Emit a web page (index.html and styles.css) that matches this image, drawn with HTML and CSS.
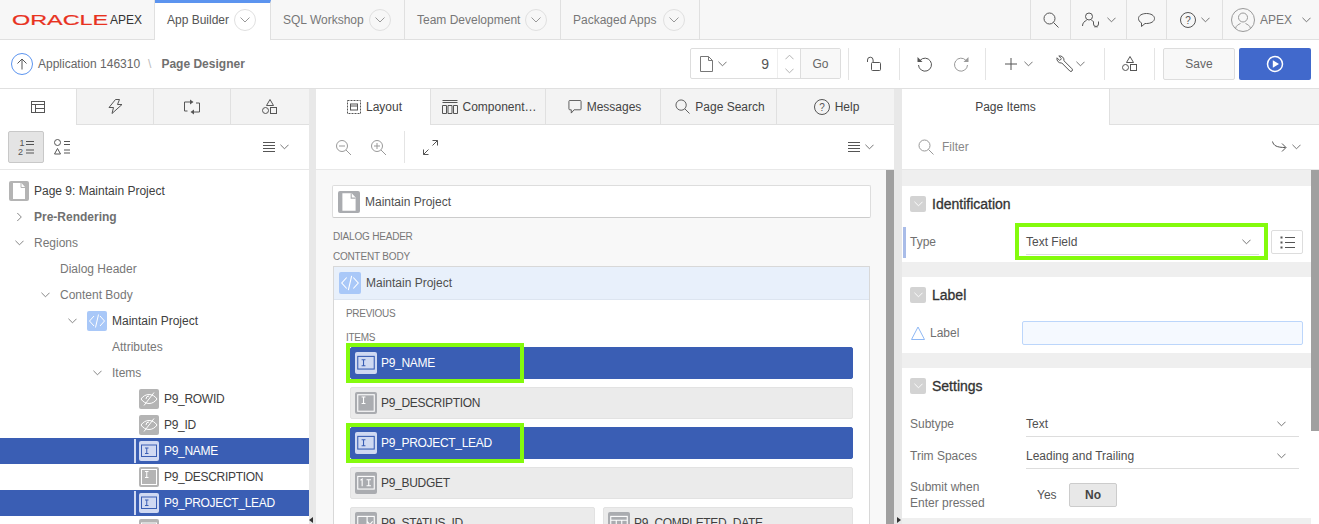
FILE: index.html
```html
<!DOCTYPE html>
<html>
<head>
  <title>Page Designer</title>
  <link rel="stylesheet" href="styles.css">
</head>
<body>
  <svg class="defs">
    <symbol id="chev" viewBox="0 0 10 6"><path d="M.5.5 5 5 9.500.5"/></symbol>
    <symbol id="search" viewBox="0 0 16 16"><circle cx="6.500" cy="6.500" r="5.500"/><path d="m10.500 10.500 5 5"/></symbol>
    <symbol id="page" viewBox="0 0 13 16"><path d="M.5.5h8l4 4v11H.5zM8.500.5v4h4"/></symbol>
    <symbol id="lock" viewBox="0 0 14 15"><path d="M.5 6V4a2.800 2.800 0 0 1 5.600 0v2.500"/><rect x="4.500" y="6.500" width="9" height="8" rx="1"/></symbol>
    <symbol id="undo" viewBox="0 0 16 16"><path d="M3 4.500A6.500 6.500 0 1 1 1.500 9"/><path class="solid" d="M.5 1v5h5z"/></symbol>
    <symbol id="redo" viewBox="0 0 16 16"><path d="M13 4.500A6.500 6.500 0 1 0 14.500 9"/><path class="solid" d="M15.500 1v5h-5z"/></symbol>
    <symbol id="plus" viewBox="0 0 12 12"><path d="M6 0v12M0 6h12"/></symbol>
    <symbol id="wrench" viewBox="0 0 17 17"><path d="M16 13.800 8 5.800A4.300 4.300 0 0 0 2.800 1l2.700 2.700-1.800 1.800L1 2.800a4.300 4.300 0 0 0 4.800 5.200l8 8a1.500 1.500 0 0 0 2.200-2.200z"/></symbol>
    <symbol id="shapes" viewBox="0 0 16 16"><path d="M8 .5l3.500 6h-7z"/><circle cx="3.500" cy="11.500" r="3"/><rect x="8.500" y="8.500" width="6" height="6"/></symbol>
    <symbol id="play" viewBox="0 0 18 18"><circle cx="9" cy="9" r="7.500"/><path class="solid" d="M6.800 5.300v7.400L13 9z"/></symbol>
    <symbol id="userkey" viewBox="0 0 20 16"><circle cx="7" cy="4.500" r="3.500"/><path d="M.5 14c0-3 2-5 4-5.500M9.500 8.500c1 .3 1.500.7 2 1.200"/><path d="M11.500 9.500v2.500a2.500 2.500 0 0 0 5 0V9.500M13 14.500v1M15 14.500v1"/></symbol>
    <symbol id="chat" viewBox="0 0 17 14"><path d="M8.500.5c4.400 0 8 2 8 5s-3.600 5-8 5H7l-3.500 3v-3.600C1.700 9 .5 7.400.5 5.500c0-3 3.600-5 8-5z"/></symbol>
    <symbol id="help" viewBox="0 0 16 16"><circle cx="8" cy="8" r="7.500"/><text x="8" y="11.500" text-anchor="middle" class="glyph">?</text></symbol>
    <symbol id="avatar" viewBox="0 0 24 24"><circle cx="12" cy="12" r="11.500"/><circle cx="12" cy="9.500" r="4.500"/><path d="M4.500 20.500c.5-3 3-4 5-5M19.500 20.500c-.5-3-3-4-5-5"/></symbol>
    <symbol id="up" viewBox="0 0 22 22"><circle class="blue" cx="11" cy="11" r="10.500"/><path d="M11 16.500V6M6.500 10.500 11 6l4.500 4.500"/></symbol>
    <symbol id="table" viewBox="0 0 14 12"><rect x=".5" y=".5" width="13" height="11"/><path d="M.5 3.500h13M4.500 3.500v8M4.500 7.500h9"/></symbol>
    <symbol id="bolt" viewBox="0 0 14 15"><path d="M7 .5.500 8.500H5L3.500 14.500 13.500 5.500H9L11 .5zM12 .5"/></symbol>
    <symbol id="swap" viewBox="0 0 16 15"><path d="M6 2.500H.5v9h3M10 12.500h5.500v-9H12"/><path class="solid" d="M6 0v5l3.500-2.500zM10 10v5l-3.500-2.500z"/></symbol>
    <symbol id="numlist" viewBox="0 0 17 16"><text x="1.500" y="7" class="digit">1</text><text x="0" y="15.500" class="digit">2</text><path d="M8 2.500h8M8 5.500h8M8 11h8M8 14h8"/></symbol>
    <symbol id="typelist" viewBox="0 0 16 16"><circle cx="3.500" cy="3.500" r="3"/><path d="M3.500 9.500 6.500 15H.5zM10 2.500h6M10 5.500h6M10 11h6M10 14h6"/></symbol>
    <symbol id="menu" viewBox="0 0 12 10"><path d="M0 .5h12M0 3.500h12M0 6.500h12M0 9.500h12"/></symbol>
    <symbol id="zoomout" viewBox="0 0 15 15"><circle cx="6" cy="6" r="5.500"/><path d="m10 10 5 5M3 6h6"/></symbol>
    <symbol id="zoomin" viewBox="0 0 15 15"><circle cx="6" cy="6" r="5.500"/><path d="m10 10 5 5M3 6h6M6 3v6"/></symbol>
    <symbol id="expand" viewBox="0 0 15 15"><path d="M.5 14.500l5-5M.5 9.500v5h5M14.500.5l-5 5M9.500.5h5v5"/></symbol>
    <symbol id="layout" viewBox="0 0 14 14"><rect class="dash" x=".5" y=".5" width="13" height="13"/><rect x="3.500" y="4" width="7" height="6"/><path d="M3.500 6h7"/></symbol>
    <symbol id="columns" viewBox="0 0 16 14"><path d="M.5.500h15M.5 2.500h15"/><path d="M.5 5.500h4v8h-4zM6 5.500h4v8H6zM11.500 5.500h4v8h-4z"/></symbol>
    <symbol id="message" viewBox="0 0 14 15"><path d="M1.500.5h11a1 1 0 0 1 1 1v8a1 1 0 0 1-1 1H6l-3 3.500v-3.500H1.500a1 1 0 0 1-1-1v-8a1 1 0 0 1 1-1z"/></symbol>
    <symbol id="route" viewBox="0 0 15 12"><path d="M.5.500c1 4 4 6 13 6M10 2.500l4 4-4 4"/></symbol>
    <symbol id="list" viewBox="0 0 15 13"><path d="M5 1.500h10M5 6.500h10M5 11.500h10"/><path class="solid" d="M.5.500h2v2h-2zM.5 5.500h2v2h-2zM.5 10.500h2v2h-2z"/></symbol>
    <symbol id="triangle" viewBox="0 0 14 14"><path d="M7 1 13.500 13.500H.5z"/></symbol>
    <symbol id="code" viewBox="0 0 20 20"><path d="M7 5 2.500 10 7 15M13 5l4.500 5-4.500 5M11.500 3.500l-3 13"/></symbol>
    <symbol id="sheet" viewBox="0 0 20 20"><path class="solid" d="M4 2h8.500L16 6v12H4z"/><path class="cut" d="M12 2v4.500h4"/></symbol>
    <symbol id="eyeoff" viewBox="0 0 20 20"><path d="M2 10c2-3 5-4.500 8-4.500s6 1.500 8 4.500c-2 3-5 4.500-8 4.500S4 13 2 10zM15 3.500l-10 13"/><path d="M10 7a3 3 0 0 0-3 3"/></symbol>
    <symbol id="textitem" viewBox="0 0 20 20"><rect x="2.500" y="4" width="15" height="11.500"/><path d="M6 7h3.500M6 12.500h3.500M7.750 7v5.500"/></symbol>
    <symbol id="areaitem" viewBox="0 0 20 20"><rect x="2.500" y="2.500" width="15" height="15"/><path d="M6 4.500h3.500M6 10.500h3.500M7.750 4.500v6"/></symbol>
    <symbol id="numitem" viewBox="0 0 20 20"><rect x="2.500" y="4" width="15" height="11.500"/><path d="M5 7.500l1.500-1v6.500M10.500 7h4M10.500 12.500h4M12.500 7v5.500"/></symbol>
    <symbol id="selitem" viewBox="0 0 20 20"><rect x="2.500" y="4" width="15" height="11.500"/><path d="M11 8.500l2.500 3 2.500-3M11 4v11.500"/></symbol>
    <symbol id="dateitem" viewBox="0 0 20 20"><rect x="2.500" y="4" width="15" height="13"/><path d="M2.500 7.500h15M7.500 7.500V17M12.500 7.500V17M2.500 12h15"/></symbol>
  </svg>

  <header class="topbar">
    <div class="logo"><span class="logo-oracle">ORACLE</span><span class="logo-apex">APEX</span></div>
    <a class="nav-tab active" style="width:116px">App Builder <span class="nav-arrow"><svg class="ic chev"><use href="#chev"/></svg></span></a>
    <a class="nav-tab" style="width:134px">SQL Workshop <span class="nav-arrow"><svg class="ic chev"><use href="#chev"/></svg></span></a>
    <a class="nav-tab" style="width:156px">Team Development <span class="nav-arrow"><svg class="ic chev"><use href="#chev"/></svg></span></a>
    <a class="nav-tab wide-gap" style="width:139px">Packaged Apps <span class="nav-arrow"><svg class="ic chev"><use href="#chev"/></svg></span></a>
    <div class="top-right">
      <div class="top-cell cell-40"><svg class="ic s16"><use href="#search"/></svg></div>
      <div class="top-cell cell-56"><svg class="ic user-key"><use href="#userkey"/></svg><svg class="ic chev"><use href="#chev"/></svg></div>
      <div class="top-cell cell-40"><svg class="ic chat"><use href="#chat"/></svg></div>
      <div class="top-cell cell-56"><svg class="ic s16"><use href="#help"/></svg><svg class="ic chev"><use href="#chev"/></svg></div>
      <div class="top-cell cell-user"><svg class="ic s24"><use href="#avatar"/></svg><span class="user-name">APEX</span><svg class="ic chev"><use href="#chev"/></svg></div>
    </div>
  </header>

  <div class="toolbar">
    <div class="crumbs">
      <svg class="ic s22"><use href="#up"/></svg>
      <span>Application 146310</span>
      <span class="crumb-sep">\</span>
      <b>Page Designer</b>
    </div>
    <div class="tools">
      <div class="page-box">
        <div class="page-pick"><svg class="ic page-ic"><use href="#page"/></svg><svg class="ic chev"><use href="#chev"/></svg><span class="page-num">9</span></div>
        <div class="page-spin"><svg class="ic chev flip"><use href="#chev"/></svg><svg class="ic chev"><use href="#chev"/></svg></div>
        <div class="page-go">Go</div>
      </div>
      <div class="tool-group g-lock"><svg class="ic lock"><use href="#lock"/></svg></div>
      <div class="tool-group g-undo"><svg class="ic s16"><use href="#undo"/></svg><svg class="ic s16 muted"><use href="#redo"/></svg></div>
      <div class="tool-group g-add">
        <svg class="ic s12"><use href="#plus"/></svg><svg class="ic chev add-chev"><use href="#chev"/></svg>
        <svg class="ic wrench"><use href="#wrench"/></svg><svg class="ic chev wrench-chev"><use href="#chev"/></svg>
      </div>
      <div class="tool-group g-shapes"><svg class="ic s16"><use href="#shapes"/></svg></div>
      <div class="btn-save">Save</div>
      <div class="btn-run"><svg class="ic s18"><use href="#play"/></svg></div>
    </div>
  </div>

  <main class="panes">
    <section class="pane-left">
      <div class="tabs">
        <div class="tab active t77"><svg class="ic table"><use href="#table"/></svg></div>
        <div class="tab t77"><svg class="ic s15"><use href="#bolt"/></svg></div>
        <div class="tab t77"><svg class="ic s16"><use href="#swap"/></svg></div>
        <div class="tab grow"><svg class="ic s16"><use href="#shapes"/></svg></div>
      </div>
      <div class="subbar">
        <div class="view-btn on"><svg class="ic numlist"><use href="#numlist"/></svg></div>
        <div class="view-btn"><svg class="ic s16"><use href="#typelist"/></svg></div>
        <div class="menu-btn"><svg class="ic menu"><use href="#menu"/></svg><svg class="ic chev"><use href="#chev"/></svg></div>
      </div>
      <div class="tree">
        <div class="node lvl0"><span class="node-ic"><svg class="ic s20"><use href="#sheet"/></svg></span><span class="dark">Page 9: Maintain Project</span></div>
        <div class="node lvl1"><span class="twist"><svg class="ic chev right"><use href="#chev"/></svg></span><b>Pre-Rendering</b></div>
        <div class="node lvl1"><span class="twist"><svg class="ic chev"><use href="#chev"/></svg></span>Regions</div>
        <div class="node lvl2">Dialog Header</div>
        <div class="node lvl2"><span class="twist"><svg class="ic chev"><use href="#chev"/></svg></span>Content Body</div>
        <div class="node lvl3"><span class="twist"><svg class="ic chev"><use href="#chev"/></svg></span><span class="node-ic blue-ic"><svg class="ic s20"><use href="#code"/></svg></span><span class="dark">Maintain Project</span></div>
        <div class="node lvl4">Attributes</div>
        <div class="node lvl4"><span class="twist"><svg class="ic chev"><use href="#chev"/></svg></span>Items</div>
        <div class="node lvl5"><span class="node-ic"><svg class="ic s20"><use href="#eyeoff"/></svg></span><span class="dark">P9_ROWID</span></div>
        <div class="node lvl5"><span class="node-ic"><svg class="ic s20"><use href="#eyeoff"/></svg></span><span class="dark">P9_ID</span></div>
        <div class="node lvl5 sel"><span class="node-ic"><svg class="ic s20"><use href="#textitem"/></svg></span><span class="dark">P9_NAME</span></div>
        <div class="node lvl5"><span class="node-ic"><svg class="ic s20"><use href="#areaitem"/></svg></span><span class="dark">P9_DESCRIPTION</span></div>
        <div class="node lvl5 sel"><span class="node-ic"><svg class="ic s20"><use href="#textitem"/></svg></span><span class="dark">P9_PROJECT_LEAD</span></div>
        <div class="node lvl5"><span class="node-ic"><svg class="ic s20"><use href="#numitem"/></svg></span><span class="dark">P9_BUDGET</span></div>
      </div>
    </section>

    <div class="splitter w7"><span class="grip grip-left"></span></div>

    <section class="pane-center">
      <div class="tabs">
        <div class="tab active center-tab w115"><svg class="ic s14"><use href="#layout"/></svg>Layout</div>
        <div class="tab center-tab w115 tight"><svg class="ic s16"><use href="#columns"/></svg>Component…</div>
        <div class="tab center-tab w115"><svg class="ic s14"><use href="#message"/></svg>Messages</div>
        <div class="tab center-tab w116"><svg class="ic s15"><use href="#search"/></svg>Page Search</div>
        <div class="tab center-tab grow help-tab"><svg class="ic s16"><use href="#help"/></svg>Help</div>
      </div>
      <div class="subbar center-bar">
        <svg class="ic s15 muted"><use href="#zoomout"/></svg>
        <svg class="ic s15 muted zoom-in"><use href="#zoomin"/></svg>
        <span class="sub-div"></span>
        <svg class="ic s15"><use href="#expand"/></svg>
        <div class="menu-btn"><svg class="ic menu"><use href="#menu"/></svg><svg class="ic chev"><use href="#chev"/></svg></div>
      </div>
      <div class="canvas-wrap">
        <div class="canvas">
          <div class="page-row"><span class="big-ic"><svg class="ic s22"><use href="#sheet"/></svg></span>Maintain Project</div>
          <div class="slot first">DIALOG HEADER</div>
          <div class="slot">CONTENT BODY</div>
          <div class="region">
            <div class="region-head"><span class="big-ic blue-ic"><svg class="ic s22"><use href="#code"/></svg></span>Maintain Project</div>
            <div class="region-body">
              <div class="slot-in">PREVIOUS</div>
              <div class="slot-in items">ITEMS</div>
              <div class="item sel"><span class="big-ic"><svg class="ic s22"><use href="#textitem"/></svg></span>P9_NAME<span class="mark"></span></div>
              <div class="item"><span class="big-ic"><svg class="ic s22"><use href="#areaitem"/></svg></span>P9_DESCRIPTION</div>
              <div class="item sel"><span class="big-ic"><svg class="ic s22"><use href="#textitem"/></svg></span>P9_PROJECT_LEAD<span class="mark"></span></div>
              <div class="item"><span class="big-ic"><svg class="ic s22"><use href="#numitem"/></svg></span>P9_BUDGET</div>
              <div class="item-pair">
                <div class="item"><span class="big-ic"><svg class="ic s22"><use href="#selitem"/></svg></span>P9_STATUS_ID</div>
                <div class="item"><span class="big-ic"><svg class="ic s22"><use href="#dateitem"/></svg></span>P9_COMPLETED_DATE</div>
              </div>
            </div>
          </div>
        </div>
        <div class="scrollbar"></div>
      </div>
    </section>

    <div class="splitter w8"><span class="grip grip-right"></span></div>

    <section class="pane-right">
      <div class="tabs">
        <div class="tab active right-tab">Page Items</div>
        <div class="tab grow"></div>
      </div>
      <div class="subbar filter-bar">
        <svg class="ic s16 muted"><use href="#search"/></svg>
        <span class="filter-text">Filter</span>
        <div class="menu-btn"><svg class="ic route"><use href="#route"/></svg><svg class="ic chev"><use href="#chev"/></svg></div>
      </div>
      <div class="props-wrap">
        <div class="props">
          <div class="group">
            <div class="group-head"><span class="toggle"><svg class="ic chev"><use href="#chev"/></svg></span>Identification</div>
            <div class="prop type-row">
              <label class="prop-label">Type</label>
              <div class="select">Text Field<svg class="ic chev"><use href="#chev"/></svg><span class="mark-select"></span></div>
              <div class="list-btn"><svg class="ic list"><use href="#list"/></svg></div>
            </div>
          </div>
          <div class="group">
            <div class="group-head"><span class="toggle"><svg class="ic chev"><use href="#chev"/></svg></span>Label</div>
            <div class="prop label-row">
              <label class="prop-label"><svg class="ic s14 req"><use href="#triangle"/></svg>Label</label>
              <div class="text-input"></div>
            </div>
          </div>
          <div class="group">
            <div class="group-head"><span class="toggle"><svg class="ic chev"><use href="#chev"/></svg></span>Settings</div>
            <div class="prop plain-row first-row">
              <label class="prop-label">Subtype</label>
              <div class="select wide">Text<svg class="ic chev"><use href="#chev"/></svg></div>
            </div>
            <div class="prop plain-row">
              <label class="prop-label">Trim Spaces</label>
              <div class="select wide">Leading and Trailing<svg class="ic chev"><use href="#chev"/></svg></div>
            </div>
            <div class="prop switch-row">
              <label class="prop-label">Submit when<br>Enter pressed</label>
              <span class="yes">Yes</span>
              <span class="no">No</span>
            </div>
          </div>
        </div>
        <div class="scrollbar short"></div>
      </div>
    </section>
  </main>
</body>
</html>
```
FILE: styles.css
```css
* {
  box-sizing: border-box;
}

html, body {
  margin: 0;
  height: 524px;
  overflow: hidden;
}

body {
  font-family: "Liberation Sans", Arial, sans-serif;
  font-size: 12px;
  color: #707070;
  background: #fff;
}

.defs {
  display: none;
}

/* icons */
.ic {
  display: block;
  flex: none;
  fill: none;
  color: #555;
  stroke: currentColor;
  stroke-width: 1;
}
.solid { fill: currentColor; stroke: none; }
.s12 { width: 12px; height: 12px; }
.s14 { width: 14px; height: 14px; }
.s15 { width: 15px; height: 15px; }
.s16 { width: 16px; height: 16px; }
.s18 { width: 18px; height: 18px; }
.s20 { width: 20px; height: 20px; }
.s22 { width: 22px; height: 22px; }
.s24 { width: 24px; height: 24px; }
.chev { width: 9px; height: 6px; color: #666; }
.flip { transform: rotate(180deg); }
.right { transform: rotate(-90deg); }
.muted { color: #999; }
.glyph { font: 10px "Liberation Sans", sans-serif; fill: currentColor; stroke: none; }
.digit { font: 9px "Liberation Sans", sans-serif; fill: currentColor; stroke: none; }
.dash { stroke-dasharray: 2 1; }
.blue { stroke: #5c94ef; }
.cut { stroke: var(--cut, #b4b4b4); }

/* top bar */
.topbar {
  display: flex;
  height: 40px;
  background: #f7f7f7;
  border-bottom: 1px solid #e0e0e0;
}

.logo {
  width: 155px;
  display: flex;
  align-items: center;
  padding-left: 12px;
  border-right: 1px solid #e0e0e0;
}

.logo-oracle {
  display: block;
  width: 62px;
  margin-right: 33px;
  font-size: 15px;
  line-height: 15px;
  color: #e8321f;
  -webkit-text-stroke: 0.2px #e8321f;
  transform: scaleX(1.56);
  transform-origin: left center;
}

.logo-apex {
  color: #333;
  font-size: 12px;
  margin-left: 3px;
}

.nav-tab {
  display: flex;
  align-items: center;
  padding-left: 12px;
  border-right: 1px solid #e0e0e0;
  color: #777;
  gap: 5px;
}

.nav-tab.wide-gap { gap: 7px; }

.nav-tab.active {
  background: #fff;
  color: #555;
  height: 40px;
  border-top: 3px solid #5c94ef;
  padding-bottom: 3px;
}

.nav-arrow {
  width: 22px;
  height: 22px;
  border: 1px solid #e0e0e0;
  border-radius: 50%;
  display: flex;
  align-items: center;
  justify-content: center;
}

.nav-arrow .chev { color: #999; width: 10px; }

.top-right {
  margin-left: auto;
  display: flex;
}

.top-cell {
  display: flex;
  align-items: center;
  justify-content: center;
  gap: 5px;
  border-left: 1px solid #e0e0e0;
}

.cell-40 { width: 40px; }
.cell-56 { width: 56px; }
.cell-user { width: 97px; gap: 5px; }
.user-key { width: 20px; height: 16px; }
.chat { width: 17px; height: 14px; }
.cell-user .s24 { color: #999; }
.user-name { margin-right: 5px; color: #777; }

/* page toolbar */
.toolbar {
  display: flex;
  align-items: center;
  height: 49px;
  border-bottom: 1px solid #e0e0e0;
  padding: 0 8px 1px 11px;
}

.crumbs {
  display: flex;
  align-items: center;
  gap: 5px;
  color: #666;
}

.crumbs b { color: #707070; }
.crumb-sep { color: #bbb; margin: 0 5px 0 3px; }

.tools {
  margin-left: auto;
  display: flex;
  align-items: center;
}

.page-box {
  display: flex;
  width: 151px;
  height: 31px;
  margin-right: 7px;
  border: 1px solid #ddd;
  border-radius: 2px;
}

.page-pick {
  width: 86px;
  display: flex;
  align-items: center;
  padding-left: 9px;
  gap: 5px;
}

.page-ic { width: 13px; height: 16px; color: #777; }
.page-num { margin-left: auto; margin-right: 8px; font-size: 14px; color: #555; }

.page-spin {
  width: 24px;
  border-left: 1px solid #eee;
  border-right: 1px solid #ddd;
  display: flex;
  flex-direction: column;
  align-items: center;
  justify-content: center;
  gap: 8px;
}

.page-spin .chev { color: #aaa; }

.page-go {
  flex: 1;
  display: flex;
  align-items: center;
  justify-content: center;
  background: #f8f8f8;
  color: #666;
}

.tool-group {
  height: 32px;
  display: flex;
  align-items: center;
  justify-content: center;
  border-left: 1px solid #e4e4e4;
}

.g-lock { width: 51px; }
.lock { width: 14px; height: 15px; }
.g-undo { width: 86px; gap: 20px; }
.g-add { width: 119px; }
.add-chev { margin-left: 7px; }
.wrench { width: 17px; height: 17px; margin-left: 23px; }
.wrench-chev { margin-left: 3px; }
.g-shapes { width: 51px; border-right: 1px solid #e4e4e4; }

.btn-save {
  width: 72px;
  height: 32px;
  margin-left: 8px;
  display: flex;
  align-items: center;
  justify-content: center;
  background: #f8f8f8;
  border: 1px solid #ddd;
  border-radius: 2px;
  color: #666;
}

.btn-run {
  width: 72px;
  height: 32px;
  margin-left: 4px;
  display: flex;
  align-items: center;
  justify-content: center;
  background: #4169cc;
  border-radius: 2px;
}

.btn-run .ic { color: #fff; stroke-width: 1.5; }

/* panes */
.panes {
  display: flex;
  height: 435px;
}

.pane-left { width: 309px; flex: none; }
.pane-center { width: 578px; flex: none; }
.pane-right { flex: 1; min-width: 0; }

.splitter {
  position: relative;
  flex: none;
  background: #e8e8e8;
}

.w7 { width: 7px; }
.w8 { width: 8px; }

.grip {
  position: absolute;
  top: 428px;
  border: 3px solid transparent;
}

.grip-left { left: 0; border-right: 4px solid #333; border-left: 0; }
.grip-right { left: 3px; border-left: 4px solid #333; border-right: 0; }

.tabs {
  display: flex;
  height: 36px;
  border-bottom: 1px solid #e0e0e0;
}

.tab {
  display: flex;
  align-items: center;
  justify-content: center;
  background: #f3f3f3;
  border-right: 1px solid #e0e0e0;
  color: #555;
  gap: 5px;
}

.tab.active {
  background: #fff;
  height: 36px;
}

.t77 { width: 77px; }
.grow { flex: 1; border-right: 0; }
.table { width: 14px; height: 12px; }
.w115 { width: 115px; }
.w116 { width: 116px; }
.center-tab { color: #444; padding-left: 3px; }
.tight { gap: 4px; }
.help-tab { padding-left: 2px; padding-right: 0; }
.right-tab { width: 208px; color: #444; }

.subbar {
  display: flex;
  align-items: center;
  height: 45px;
  padding-left: 8px;
  border-bottom: 1px solid #e8e8e8;
}

.center-bar { padding-left: 20px; }
.zoom-in { margin-left: 20px; }

.sub-div {
  width: 1px;
  height: 32px;
  margin: 0 18px 0 18px;
  background: #e4e4e4;
}

.view-btn {
  width: 36px;
  height: 32px;
  display: flex;
  align-items: center;
  justify-content: center;
  border: 1px solid transparent;
  border-radius: 2px;
}

.view-btn.on {
  background: #e4e4e4;
  border-color: #c8c8c8;
}

.numlist { width: 17px; height: 16px; }

.menu-btn {
  margin-left: auto;
  margin-right: 20px;
  display: flex;
  align-items: center;
  gap: 5px;
}

.menu { width: 12px; height: 10px; }

/* tree */
.tree {
  padding-top: 8px;
  background: #fff;
}

.node {
  display: flex;
  align-items: center;
  height: 26px;
  white-space: nowrap;
  color: #777;
}

.node b { color: #707070; }
.dark { color: #404040; }
.lvl0 { padding-left: 9px; }
.lvl1 { padding-left: 34px; }
.lvl2 { padding-left: 60px; }
.lvl3 { padding-left: 87px; }
.lvl4 { padding-left: 112px; }
.lvl5 { padding-left: 139px; }
.lvl5 .dark { letter-spacing: -0.3px; }

.twist {
  width: 22px;
  margin-left: -26px;
  margin-right: 4px;
  display: flex;
  justify-content: center;
}

.twist .chev { color: #777; }

.node-ic {
  width: 20px;
  height: 20px;
  margin-right: 5px;
  background: #b4b4b4;
  border-radius: 2px;
  flex: none;
  --cut: #b4b4b4;
}

.node-ic .ic { color: #fff; }
.node-ic.blue-ic { background: #a9c8f8; }

.node.sel {
  position: relative;
  background: #3a5eb4;
}

.node.sel .dark { color: #fff; }
.node.sel .node-ic { background: #d0d9f2; }
.node.sel .node-ic .ic { color: #3a5eb4; }

.node.sel::before {
  content: "";
  position: absolute;
  left: 134px;
  top: 1px;
  bottom: 1px;
  width: 2px;
  background: #d0d9f2;
}

/* layout canvas */
.canvas-wrap {
  display: flex;
  height: 354px;
}

.canvas {
  flex: 1;
  min-width: 0;
  overflow: hidden;
  padding: 15px 15px 0 16px;
  background: #f8f8f8;
}

.scrollbar {
  width: 8px;
  flex: none;
  background: #a0a0a0;
}

.scrollbar.short { height: 261px; }

.page-row {
  display: flex;
  align-items: center;
  height: 33px;
  padding-left: 5px;
  background: #fff;
  border: 1px solid #ddd;
  border-bottom-color: #ccc;
  border-radius: 2px;
  color: #505050;
}

.big-ic {
  width: 22px;
  height: 22px;
  margin-right: 5px;
  background: #aaacb0;
  border-radius: 2px;
  flex: none;
  --cut: #aaacb0;
}

.big-ic .ic { color: #fff; }
.big-ic.blue-ic { background: #a9c8f8; }

.slot {
  height: 20px;
  line-height: 22px;
  margin-left: 1px;
  font-size: 10px;
  letter-spacing: -0.2px;
  color: #777;
}

.slot.first { margin-top: 8px; }

.region {
  margin: 0 1px;
  height: 300px;
  border: 1px solid #d8d8d8;
  background: #fff;
}

.region-head {
  display: flex;
  align-items: center;
  height: 33px;
  padding-left: 5px;
  background: #e8f0fb;
  border-bottom: 1px solid #dde5f0;
  color: #505050;
}

.region-body {
  padding: 0 16px 0 12px;
}

.slot-in {
  height: 14px;
  line-height: 14px;
  margin-top: 7px;
  font-size: 10px;
  letter-spacing: -0.3px;
  color: #777;
}

.slot-in.items { margin-top: 10px; margin-bottom: 2px; }

.item {
  position: relative;
  display: flex;
  align-items: center;
  height: 32px;
  margin-bottom: 8px;
  padding-left: 4px;
  background: #ebebeb;
  border: 1px solid #e2e2e2;
  border-radius: 2px;
  color: #404040;
  letter-spacing: -0.3px;
}

.item .big-ic { margin-right: 4px; }
.region-body > .item { margin-left: 4px; }

.item.sel {
  background: #3a5eb4;
  border-color: #3a5eb4;
  color: #fff;
}

.item.sel .big-ic { background: #d0d9f2; }
.item.sel .big-ic .ic { color: #3a5eb4; }

.mark {
  position: absolute;
  left: -5px;
  top: -5px;
  width: 178px;
  height: 40px;
  border: 4px solid #84fb0c;
}

.item-pair {
  display: flex;
  gap: 8px;
  margin-left: 4px;
}

.item-pair .item:first-child { width: 245px; flex: none; }
.item-pair .item:last-child { flex: 1; }

/* property editor */
.filter-bar {
  padding-left: 16px;
}

.filter-text {
  margin-left: 8px;
  color: #888;
}

.filter-bar .menu-btn { margin-right: 18px; }
.route { width: 15px; height: 12px; }

.props-wrap {
  display: flex;
  height: 354px;
}

.props {
  flex: 1;
  min-width: 0;
  padding-top: 16px;
  background: #efefef;
  overflow: hidden;
}

.group {
  background: #fff;
  margin-bottom: 15px;
}

.group-head {
  display: flex;
  align-items: center;
  height: 36px;
  padding-left: 8px;
  font-size: 14px;
  color: #333;
  -webkit-text-stroke: 0.3px #333;
}

.toggle {
  width: 16px;
  height: 16px;
  margin-right: 6px;
  display: flex;
  align-items: center;
  justify-content: center;
  background: #d3d3d3;
  border-radius: 2px;
}

.toggle .chev { color: #fff; }

.prop {
  position: relative;
  display: flex;
  align-items: center;
}

.prop-label {
  display: flex;
  align-items: center;
  width: 124px;
  flex: none;
  padding-left: 8px;
  color: #707070;
}

.type-row {
  height: 40px;
}

.type-row::before {
  content: "";
  position: absolute;
  left: 1px;
  top: 5px;
  bottom: 4px;
  width: 3px;
  background: #a9bce8;
}

.select {
  position: relative;
  display: flex;
  align-items: center;
  justify-content: space-between;
  width: 233px;
  height: 25px;
  padding-right: 8px;
  border-bottom: 1px solid #ddd;
  color: #505050;
}

.select.wide { width: 273px; padding-right: 13px; }

.mark-select {
  position: absolute;
  left: -11px;
  top: -7px;
  width: 253px;
  height: 37px;
  border: 4px solid #84fb0c;
}

.list-btn {
  width: 32px;
  height: 24px;
  margin-left: 12px;
  display: flex;
  align-items: center;
  justify-content: center;
  border: 1px solid #ddd;
  border-radius: 2px;
}

.list { width: 15px; height: 13px; }

.label-row {
  height: 40px;
}

.label-row .prop-label { width: 120px; }
.req { color: #8fb8f4; margin-right: 5px; margin-left: 1px; }

.text-input {
  width: 281px;
  height: 24px;
  background: #f5f9ff;
  border: 1px solid #bcd6fb;
  border-radius: 2px;
}

.plain-row {
  height: 32px;
}

.plain-row.first-row {
  margin-top: 4px;
}

.switch-row {
  height: 46px;
  line-height: 16px;
}

.yes { margin-left: 11px; width: 32px; color: #555; }

.no {
  width: 48px;
  height: 24px;
  display: flex;
  align-items: center;
  justify-content: center;
  background: #e8e8e8;
  border: 1px solid #ccc;
  border-radius: 2px;
  font-weight: bold;
  color: #444;
}
```
